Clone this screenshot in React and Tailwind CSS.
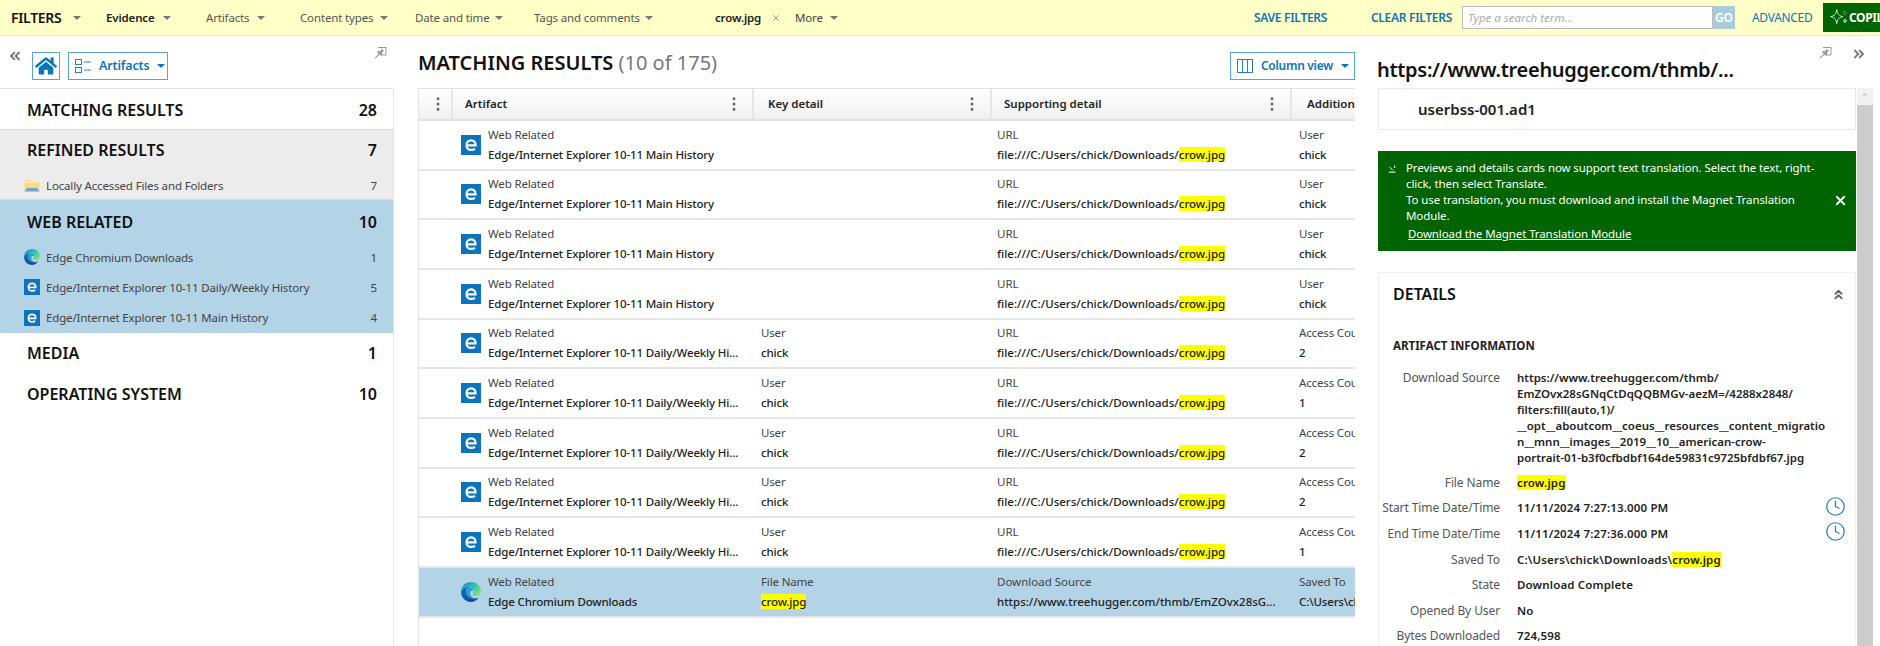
import { ChevronsLeft, ChevronsRight, ChevronsUp, Clock, X, EllipsisVertical } from 'lucide-react'
import { FaHome } from 'react-icons/fa'

const Caret = ({ className = 'border-t-[#777]' }) => (
  <span className={`inline-block w-0 h-0 border-x-[4px] border-x-transparent border-t-[4px] ${className}`}></span>
)

const IeIcon = ({ className = 'w-[20px] h-[20px]' }) => (
  <svg viewBox="0 0 20 20" className={className}>
    <rect width="20" height="20" fill="#0b74bd" />
    <path d="M5.6 10.400h9c.2-3-1.700-5-4.400-5-2.900 0-4.700 2.100-4.700 4.800 0 2.900 1.900 4.700 4.700 4.700 1.500 0 2.800-.4 3.800-1.100" fill="none" stroke="#fff" strokeWidth="2.100" />
  </svg>
)

const EdgeIcon = ({ className = 'w-[20px] h-[20px]' }) => (
  <svg viewBox="0 0 20 20" className={className}>
    <defs>
      <linearGradient id="edgeTop" x1="0" y1="0" x2="1" y2="0.7">
        <stop offset="0" stopColor="#1b87c4" />
        <stop offset="0.55" stopColor="#2cc0b8" />
        <stop offset="1" stopColor="#7fe07a" />
      </linearGradient>
      <linearGradient id="edgeLow" x1="0" y1="0" x2="0.7" y2="1">
        <stop offset="0" stopColor="#0c74c0" />
        <stop offset="1" stopColor="#12489a" />
      </linearGradient>
    </defs>
    <path d="M0 10C0 4 4.500 0 10 0C16 0 20 4.500 20 9.500C20 12.500 17.500 14 15 14C12.500 14 11.500 13 11.500 12C11.500 11.300 12.800 10.800 12.800 9C12.800 6.500 10 5 7.500 5C3.500 5 .5 7.500 0 10Z" fill="url(#edgeTop)" />
    <path d="M7.500 5C5.500 6 4.500 8 5 10.500C5.800 14.500 10 17 14 16.500C11 15.500 9 13.500 9 11C9 9 10.500 8.500 12.800 9C12.800 6.500 10 5 7.500 5Z" fill="#2a9fd6" />
    <path d="M0 10C.5 7.500 3.500 5 7.500 5C5.500 6 4.500 8 5 10.500C5.800 14.500 10 17 14 16.500C15.500 16.300 17 15.700 17.800 15.200C16 18.200 13 20 10 20C4.500 20 0 15.500 0 10Z" fill="url(#edgeLow)" />
  </svg>
)

const FolderIcon = () => (
  <svg viewBox="0 0 16 16" className="w-[16px] h-[16px] shrink-0">
    <path d="M0.500 3h5l1 1.500h9v10h-15z" fill="#f7dc7c" />
    <path d="M0.500 4.500h15V6h-15z" fill="#fbeeb0" />
    <path d="M3 11h10l2.500 3.500H.5z" fill="#6fa8d6" />
  </svg>
)

const PinIcon = () => (
  <svg viewBox="0 0 14 14" className="w-[14px] h-[14px]">
    <path d="M5 1.500h8v7.500H9.500" fill="none" stroke="#999" strokeWidth="1" />
    <path d="M8.500 2.500l2.500 2.500-2 1.500.5 2.500-1.500 1-1.500-1.500-4 4-.8-.8 4-4-1.500-1.500 1-1.500 2.500.5z" fill="#999" />
  </svg>
)

const SparkleIcon = () => (
  <svg viewBox="0 0 24 24" className="w-[21px] h-[21px] shrink-0" fill="none" stroke="#fff" strokeWidth="0.900">
    <path d="M10 3c.7 5 2.300 7 7 8-4.700 1-6.300 3-7 8-.7-5-2.300-7-7-8 4.700-1 6.300-3 7-8z" />
    <path d="M19.500 13.500c.2 1.500.8 2.100 2.300 2.300-1.500.2-2.100.8-2.300 2.300-.2-1.500-.8-2.100-2.300-2.300 1.500-.2 2.100-.8 2.300-2.300z" />
    <path d="M19 4.500v1M19 8v1M16.800 6.800h1M20.200 6.800h1" />
  </svg>
)

const Mark = ({ children }) => <span className="bg-[#ffff00]">{children}</span>

const crowUrl = (
  <>file:///C:/Users/chick/Downloads/<Mark>crow.jpg</Mark></>
)

const mainRow = { icon: 'ie', name: 'Edge/Internet Explorer 10-11 Main History', k1: '', k2: '', s1: 'URL', s2: crowUrl, a1: 'User', a2: 'chick' }
const dailyRow = (n) => ({ icon: 'ie', name: 'Edge/Internet Explorer 10-11 Daily/Weekly Hi...', k1: 'User', k2: 'chick', s1: 'URL', s2: crowUrl, a1: 'Access Count', a2: n })

const rows = [
  mainRow, mainRow, mainRow, mainRow,
  dailyRow('2'), dailyRow('1'), dailyRow('2'), dailyRow('2'), dailyRow('1'),
  {
    icon: 'edge', name: 'Edge Chromium Downloads', k1: 'File Name', k2: <Mark>crow.jpg</Mark>,
    s1: 'Download Source', s2: 'https://www.treehugger.com/thmb/EmZOvx28sG...', a1: 'Saved To', a2: 'C:\\Users\\chick\\Downloads', selected: true,
  },
]

const details = [
  ['File Name', <Mark>crow.jpg</Mark>],
  ['Start Time Date/Time', '11/11/2024 7:27:13.000 PM', true],
  ['End Time Date/Time', '11/11/2024 7:27:36.000 PM', true],
  ['Saved To', <>C:\Users\chick\Downloads\<Mark>crow.jpg</Mark></>],
  ['State', 'Download Complete'],
  ['Opened By User', 'No'],
  ['Bytes Downloaded', '724,598'],
]

const sourceLines = [
  'https://www.treehugger.com/thmb/',
  'EmZOvx28sGNqCtDqQQBMGv-aezM=/4288x2848/',
  'filters:fill(auto,1)/',
  '__opt__aboutcom__coeus__resources__content_migratio',
  'n__mnn__images__2019__10__american-crow-',
  'portrait-01-b3f0cfbdbf164de59831c9725bfdbf67.jpg',
]

const FilterBar = () => (
  <div className="h-[36px] shrink-0 bg-[#ffffc8] border-b border-[#e8e8d8] flex items-center text-[11.5px] text-[#555] pl-[11px] tracking-[-0.15px]">
    <span className="w-[51px] text-[14px] font-semibold text-[#111] tracking-[-0.3px]">FILTERS</span>
    <span className="ml-[11px] flex"><Caret /></span>
    <span className="ml-[25px] w-[50px] font-semibold text-[#222] whitespace-nowrap">Evidence</span>
    <span className="ml-[7px] flex"><Caret /></span>
    <span className="ml-[35px] w-[44px]">Artifacts</span>
    <span className="ml-[7px] flex"><Caret /></span>
    <span className="ml-[35px] w-[74px] whitespace-nowrap">Content types</span>
    <span className="ml-[6px] flex"><Caret /></span>
    <span className="ml-[27px] w-[74px] whitespace-nowrap">Date and time</span>
    <span className="ml-[6px] flex"><Caret /></span>
    <span className="ml-[31px] w-[106px] whitespace-nowrap">Tags and comments</span>
    <span className="ml-[5px] flex"><Caret /></span>
    <span className="ml-[62px] w-[48px] font-semibold text-[#222]">crow.jpg</span>
    <X className="ml-[8px] w-[10px] h-[10px] text-[#888]" />
    <span className="ml-[14px] w-[30px] text-[#444]">More</span>
    <span className="ml-[5px] flex"><Caret /></span>
    <span className="ml-[416px] w-[75px] font-semibold text-[12px] tracking-[-0.3px] text-[#0a76b7] whitespace-nowrap">SAVE FILTERS</span>
    <span className="ml-[42px] w-[82px] font-semibold text-[12px] tracking-[-0.3px] text-[#0a76b7] whitespace-nowrap">CLEAR FILTERS</span>
    <div className="ml-[9px] w-[251px] h-[23px] bg-white border border-[#bbb] flex items-center px-[5px] tracking-normal italic text-[#aaa]">Type a search term...</div>
    <div className="w-[22px] h-[23px] bg-[#a8ccd9] text-white text-[12px] font-semibold flex items-center justify-center">GO</div>
    <span className="ml-[17px] w-[60px] text-[12px] tracking-[-0.3px] text-[#0a76b7] whitespace-nowrap">ADVANCED</span>
    <div className="ml-[11px] flex-1 min-w-0 h-[29px] bg-[#006400] flex items-center pl-[5px] text-white text-[12px] tracking-[-0.4px] font-bold overflow-hidden whitespace-nowrap">
      <SparkleIcon />
      <span>COPILOT</span>
    </div>
  </div>
)

const Group = ({ label, count, className = '', headClass = 'h-[41px]', children }) => (
  <div className={className}>
    <div className={`${headClass} pl-[27px] pr-[16px] flex items-center justify-between text-[16px] font-semibold text-[#111]`}>
      <span>{label}</span>
      <span>{count}</span>
    </div>
    {children}
  </div>
)

const SubItem = ({ icon, label, count }) => (
  <div className="h-[30.250px] pl-[24px] pr-[16px] flex items-center text-[11.5px] tracking-[-0.15px] text-[#444]">
    <span className="w-[22px] flex items-center">{icon}</span>
    <span className="flex-1">{label}</span>
    <span>{count}</span>
  </div>
)

const LeftPanel = () => (
  <div className="w-[394px] shrink-0 flex flex-col">
    <div className="h-[52px] shrink-0 flex pt-[16px] relative">
      <ChevronsLeft className="ml-[7px] mt-[-4px] w-[16px] h-[16px] text-[#777]" strokeWidth={3} />
      <div className="ml-[9px] w-[28px] h-[28px] border border-[#5aa5d0] flex items-center justify-center">
        <FaHome className="w-[22px] h-[22px] text-[#0a76b7]" />
      </div>
      <div className="ml-[8px] w-[100px] h-[28px] border border-[#5aa5d0] flex items-center pl-[6px] text-[12.5px] tracking-[-0.15px] font-semibold text-[#0a76b7]">
        <svg viewBox="0 0 16 16" className="w-[16px] h-[16px] shrink-0" fill="none" stroke="#0a76b7" strokeWidth="0.900">
          <rect x="0.500" y="1.500" width="6" height="5" />
          <rect x="0.500" y="9.500" width="6" height="5" />
          <path d="M9 4h7M9 12h7" />
        </svg>
        <span className="ml-[8px]">Artifacts</span>
        <span className="ml-[7px] flex"><Caret className="border-t-[#0a76b7]" /></span>
      </div>
      <div className="absolute left-[373px] top-[10px]"><PinIcon /></div>
    </div>
    <div className="flex-1 border-t border-r border-[#dfe6ea]">
      <Group label="MATCHING RESULTS" count="28" headClass="h-[40px] pt-[1px]" className="border-b border-[#d8d8d8]" />
      <Group label="REFINED RESULTS" count="7" headClass="h-[40px]" className="bg-[#ececec] border-b border-[#d8d8d8] h-[70px]">
        <SubItem icon={<FolderIcon />} label="Locally Accessed Files and Folders" count="7" />
      </Group>
      <Group label="WEB RELATED" count="10" headClass="h-[41px] pt-[2px]" className="bg-[#b3d3e6]">
        <div className="pt-[1px]">
          <SubItem icon={<EdgeIcon className="w-[16px] h-[16px]" />} label="Edge Chromium Downloads" count="1" />
          <SubItem icon={<IeIcon className="w-[16px] h-[16px]" />} label="Edge/Internet Explorer 10-11 Daily/Weekly History" count="5" />
          <SubItem icon={<IeIcon className="w-[16px] h-[16px]" />} label="Edge/Internet Explorer 10-11 Main History" count="4" />
        </div>
      </Group>
      <Group label="MEDIA" count="1" />
      <Group label="OPERATING SYSTEM" count="10" headClass="h-[40px]" />
    </div>
  </div>
)

const ColHead = ({ label, className = '' }) => (
  <div className={`flex items-center justify-between border-r-2 border-[#e6e6e6] ${className}`}>
    <span className="font-semibold text-[11.5px] text-[#222] whitespace-nowrap">{label}</span>
    <EllipsisVertical className="w-[18px] h-[18px] text-[#666] mr-[9px]" />
  </div>
)

const Cell = ({ top, bottom, className = '' }) => (
  <div className={`flex flex-col justify-center gap-[4px] overflow-hidden whitespace-nowrap leading-[16px] ${className}`}>
    <span className="text-[#444] h-[16px]">{top}</span>
    <span className="font-medium text-[#222] h-[16px]">{bottom}</span>
  </div>
)

const CenterPanel = () => (
  <div className="w-[937px] ml-[24px] shrink-0 flex flex-col">
    <div className="h-[52px] shrink-0 flex justify-between pt-[16px] relative">
      <div className="text-[20px] leading-[30px] mt-[-4px] text-[#111] font-semibold">
        MATCHING RESULTS <span className="font-normal text-[#777]">(10 of 175)</span>
      </div>
      <div className="w-[125px] h-[28px] border border-[#5aa5d0] flex items-center pl-[6px] text-[12px] tracking-[-0.3px] font-semibold text-[#0a76b7]">
        <svg viewBox="0 0 16 16" className="w-[16px] h-[16px] shrink-0" fill="none" stroke="#0a76b7" strokeWidth="0.900">
          <rect x="0.500" y="1.500" width="15" height="13" />
          <path d="M5.500 1.500v13M10.500 1.500v13" />
        </svg>
        <span className="ml-[8px] whitespace-nowrap">Column view</span>
        <span className="ml-[8px] flex"><Caret className="border-t-[#0a76b7]" /></span>
      </div>
    </div>
    <div className="flex-1 border-l border-t border-[#dfe3e6] overflow-hidden">
      <div className="grid grid-cols-[34px_301px_238px_300px_63px] h-[32px] bg-gradient-to-b from-white to-[#f0f0f0] border-b-2 border-[#e2e2e2]">
        <div className="flex items-center justify-center border-r-2 border-[#e6e6e6] pl-[5px]">
          <EllipsisVertical className="w-[18px] h-[18px] text-[#666]" />
        </div>
        <ColHead label="Artifact" className="pl-[12px]" />
        <ColHead label="Key detail" className="pl-[14px]" />
        <ColHead label="Supporting detail" className="pl-[12px]" />
        <div className="pl-[15px] flex items-center font-semibold text-[11.5px] text-[#222] overflow-hidden whitespace-nowrap">Additional</div>
      </div>
      {rows.map((row, i) => (
        <div
          key={i}
          className={`grid grid-cols-[34px_301px_238px_300px_63px] h-[49.670px] border-b-2 border-[#e6e6e6] text-[11.5px] tracking-[-0.15px] ${row.selected ? 'bg-[#b3d3e6]' : ''}`}
        >
          <div />
          <div className="flex items-center pl-[8px] gap-[7px]">
            {row.icon === 'edge' ? <EdgeIcon /> : <IeIcon />}
            <Cell top="Web Related" bottom={row.name} />
          </div>
          <Cell top={row.k1} bottom={row.k2} className="pl-[7px]" />
          <Cell top={row.s1} bottom={row.s2} className="pl-[5px] tracking-normal" />
          <Cell top={row.a1} bottom={row.a2} className="pl-[7px]" />
        </div>
      ))}
    </div>
  </div>
)

const RightPanel = () => (
  <div className="flex-1 ml-[22px] flex flex-col min-w-0">
    <div className="h-[52px] shrink-0 relative">
      <div className="pt-[19px] text-[20px] leading-[30px] tracking-[-0.3px] font-semibold text-[#111] whitespace-nowrap">https://www.treehugger.com/thmb/...</div>
      <div className="absolute left-[441px] top-[10px]"><PinIcon /></div>
      <ChevronsRight className="absolute left-[474px] top-[10px] w-[16px] h-[16px] text-[#777]" strokeWidth={3} />
    </div>
    <div className="flex-1 flex min-h-0 overflow-hidden pl-[1px]">
      <div className="w-[478px] shrink-0">
        <div className="h-[42px] border border-[#e6ebef] pl-[39px] pt-[1px] flex items-center text-[15px] font-semibold text-[#222]">userbss-001.ad1</div>
        <div className="mt-[21px] h-[100px] bg-[#006400] text-white text-[11.5px] tracking-[-0.1px] leading-[16px] flex pl-[10px] pt-[9px] relative">
          <svg viewBox="0 0 12 12" className="w-[10px] h-[10px] mt-[3px] shrink-0" fill="none" stroke="#fff" strokeWidth="1.200">
            <path d="M1 11h8M2 5l4 4M8 3v3" />
          </svg>
          <div className="ml-[8px] w-[430px] whitespace-nowrap">
            <p>Previews and details cards now support text translation. Select the text, right-<br />click, then select Translate.</p>
            <p>To use translation, you must download and install the Magnet Translation<br />Module.</p>
            <p className="underline mt-[2px] pl-[2px]">Download the Magnet Translation Module</p>
          </div>
          <X className="absolute right-[8px] top-[42px] w-[15px] h-[15px]" strokeWidth={3} />
        </div>
        <div className="mt-[21px] border border-[#f0f0f0] pl-[14px] pr-[9px] relative">
          <div className="h-[42px] flex items-center justify-between text-[16px] font-semibold text-[#111]">
            <span>DETAILS</span>
            <ChevronsUp className="w-[15px] h-[15px] text-[#666]" strokeWidth={3} />
          </div>
          <div className="mt-[23px] text-[11.5px] leading-[16px] font-bold text-[#222]">ARTIFACT INFORMATION</div>
          <div className="mt-[16px] text-[12px] tracking-[-0.1px] leading-[16px]">
            <div className="flex">
              <span className="w-[118px] ml-[-11px] text-right text-[#555] shrink-0">Download Source</span>
              <div className="ml-[17px] font-semibold text-[11.5px] tracking-normal text-[#222] whitespace-nowrap">
                {sourceLines.map((line) => <div key={line}>{line}</div>)}
              </div>
            </div>
            {details.map(([label, value, clock], i) => (
              <div key={label} className={`flex items-center h-[25.600px] relative ${i === 0 ? 'mt-[4px]' : ''}`}>
                <span className="w-[118px] ml-[-11px] text-right text-[#555] shrink-0 whitespace-nowrap">{label}</span>
                <span className="ml-[17px] font-semibold text-[11.5px] tracking-[0.15px] text-[#222]">{value}</span>
                {clock && <Clock className="absolute right-[0px] top-[0px] w-[21px] h-[21px] text-[#1f7fb8]" strokeWidth={1.400} />}
              </div>
            ))}
          </div>
        </div>
      </div>
      <div className="ml-[1px] w-[16px] shrink-0 bg-[#f1f1f1] flex flex-col">
        <div className="h-[17px] flex items-center justify-center text-[#aaa] text-[9px]">⌃</div>
        <div className="flex-1 bg-[#cdcdcd]"></div>
      </div>
    </div>
  </div>
)

export default function App() {
  return (
    <div className="w-[1880px] h-[646px] overflow-hidden bg-white flex flex-col font-['Noto_Sans',sans-serif]">
      <FilterBar />
      <div className="flex flex-1 min-h-0">
        <LeftPanel />
        <CenterPanel />
        <RightPanel />
      </div>
    </div>
  )
}
